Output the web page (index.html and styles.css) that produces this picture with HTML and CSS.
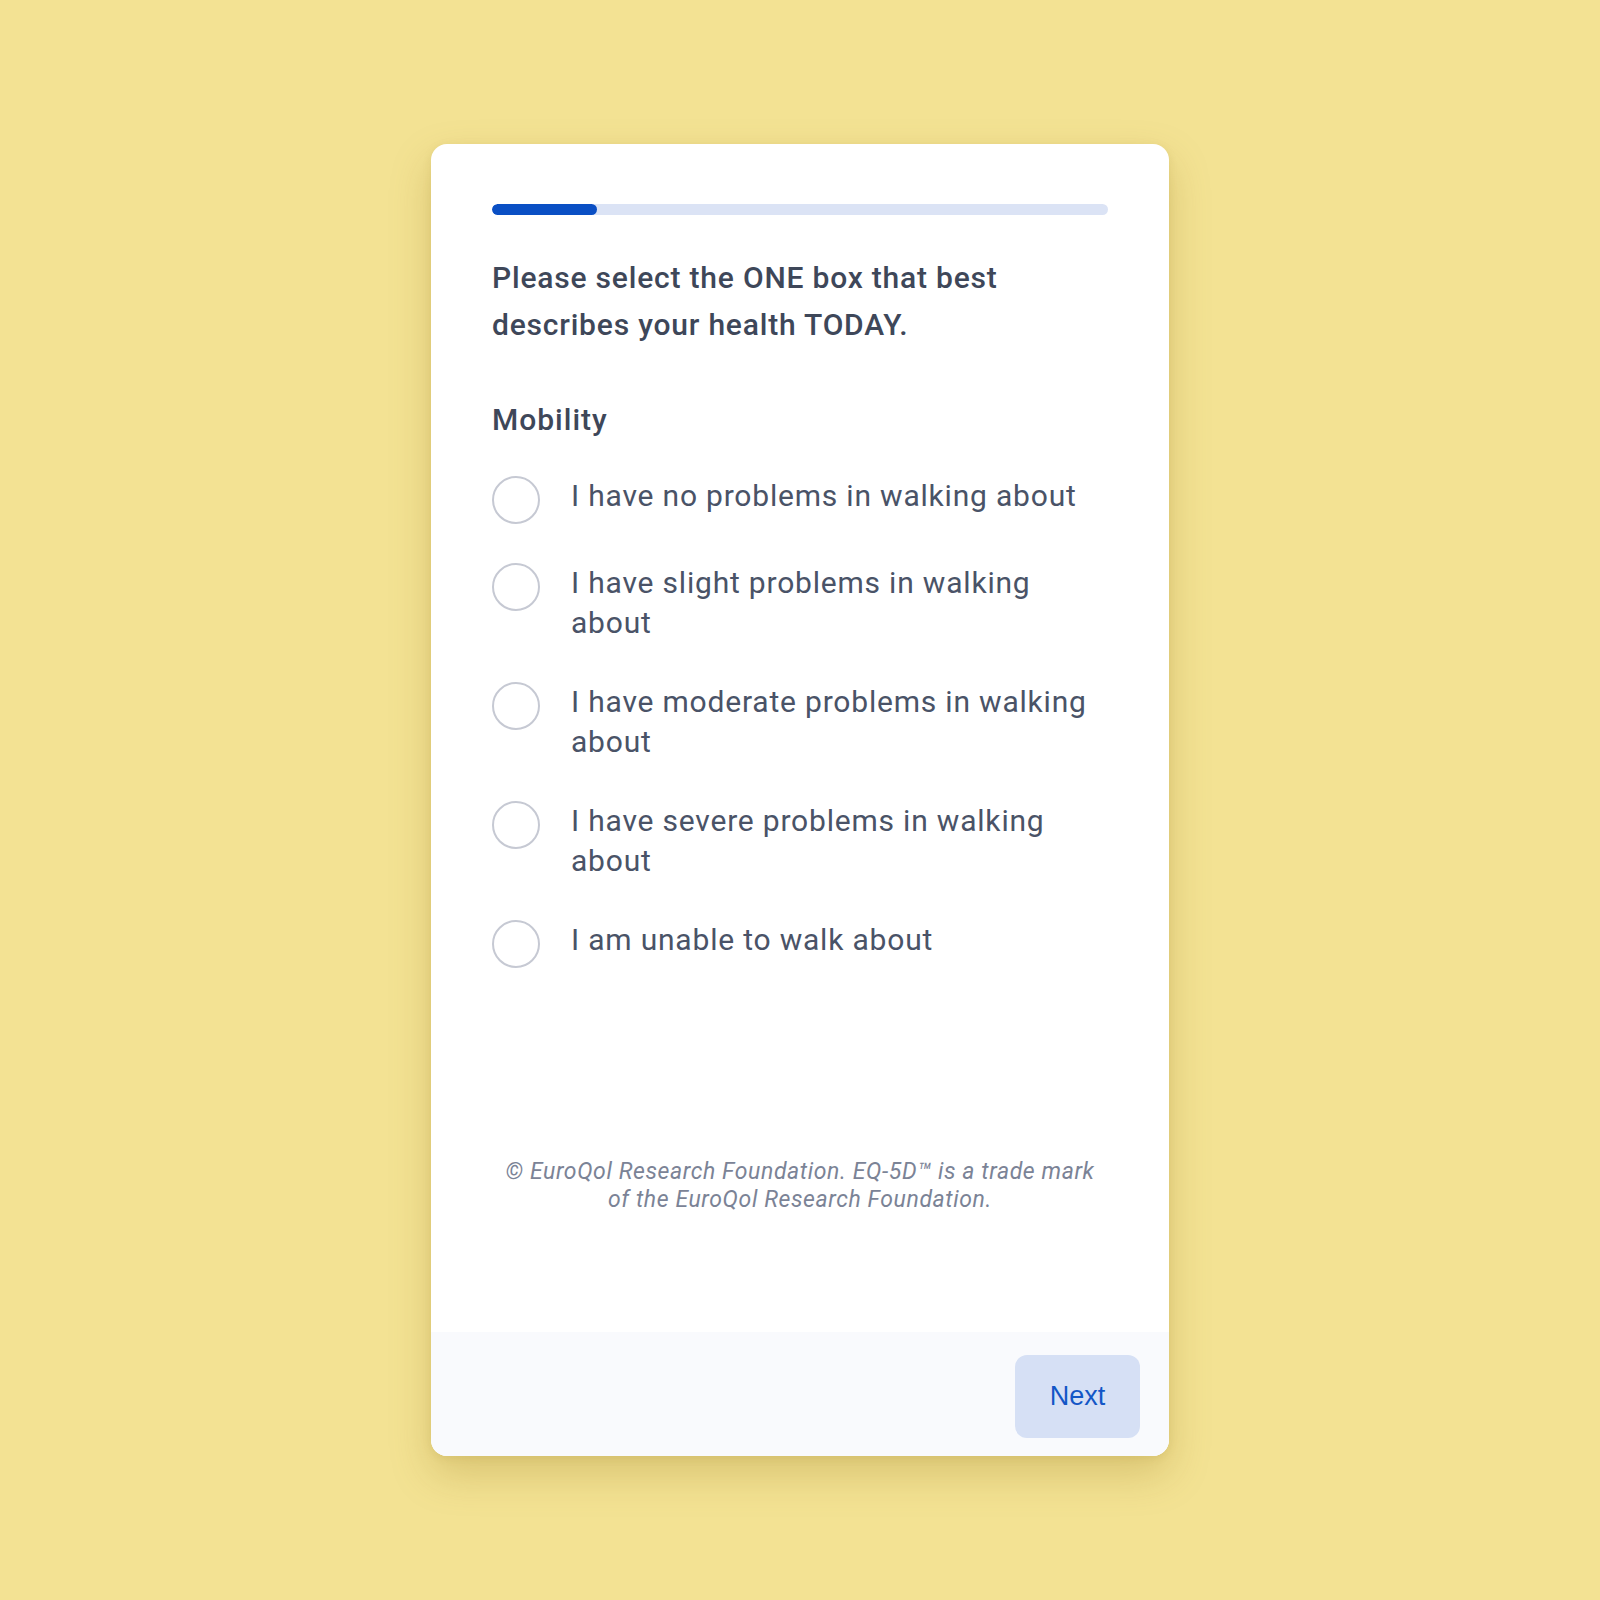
FILE: index.html
```html
<!DOCTYPE html>
<html lang="en">
<head>
<meta charset="utf-8">
<title>EQ-5D Mobility</title>
<link rel="stylesheet" href="styles.css">
</head>
<body>
<div class="card">
  <div class="content">
    <div class="progress"><div class="progress-fill" style="width:17%"></div></div>
    <h1 class="question">Please select the ONE box that best describes your health TODAY.</h1>
    <h2 class="dimension">Mobility</h2>
    <div class="options">
      <label class="option"><span class="radio"></span><span class="option-text">I have no problems in walking about</span></label>
      <label class="option"><span class="radio"></span><span class="option-text">I have slight problems in walking about</span></label>
      <label class="option"><span class="radio"></span><span class="option-text">I have moderate problems in walking about</span></label>
      <label class="option"><span class="radio"></span><span class="option-text">I have severe problems in walking about</span></label>
      <label class="option"><span class="radio"></span><span class="option-text">I am unable to walk about</span></label>
    </div>
    <p class="copyright">© EuroQol Research Foundation. EQ-5D™ is a trade mark of the EuroQol Research Foundation.</p>
  </div>
  <div class="footer">
    <button class="next">Next</button>
  </div>
</div>
</body>
</html>
```
FILE: styles.css
```css
html, body {
  margin: 0;
  padding: 0;
}
body {
  background: #f3e293;
  min-height: 1600px;
  display: flex;
  align-items: center;
  justify-content: center;
  font-family: Roboto, "Liberation Sans", sans-serif;
}
.card {
  width: 738px;
  height: 1312px;
  background: #ffffff;
  border-radius: 16px;
  box-shadow: 0 18px 40px rgba(150, 120, 30, 0.28), 0 2px 8px rgba(150, 120, 30, 0.12);
  display: flex;
  flex-direction: column;
  overflow: hidden;
}
.content {
  flex: 1;
  display: flex;
  flex-direction: column;
  padding: 60px 61px 118px 61px;
}
.progress {
  height: 11px;
  border-radius: 6px;
  background: #dbe3f5;
  overflow: hidden;
}
.progress-fill {
  height: 100%;
  background: #0a4fc4;
  border-radius: 6px;
}
.question {
  margin: 39px 0 0 0;
  font-size: 30px;
  line-height: 47px;
  font-weight: 500;
  letter-spacing: 0.8px;
  color: #3e4759;
}
.dimension {
  margin: 52px 0 0 0;
  font-size: 30px;
  line-height: 40px;
  font-weight: 500;
  letter-spacing: 1px;
  color: #3e4759;
}
.options {
  margin-top: 36px;
  display: flex;
  flex-direction: column;
  gap: 39px;
}
.option {
  display: flex;
  align-items: flex-start;
  gap: 31px;
}
.radio {
  flex: none;
  width: 44px;
  height: 44px;
  border: 2px solid #c6c9d3;
  border-radius: 50%;
  box-sizing: content-box;
}
.option-text {
  font-size: 30px;
  line-height: 40px;
  letter-spacing: 0.8px;
  color: #4a5367;
}
.copyright {
  margin: auto 0 0 0;
  text-align: center;
  font-style: italic;
  font-size: 23px;
  line-height: 28px;
  letter-spacing: 0.6px;
  color: #7b8396;
}
.footer {
  height: 124px;
  background: #f9fafd;
  display: flex;
  justify-content: flex-end;
  align-items: flex-start;
  padding: 23px 29px 0 0;
  box-sizing: border-box;
}
.next {
  width: 125px;
  height: 83px;
  border: none;
  border-radius: 12px;
  background: #d6e0f5;
  color: #1356c6;
  font-family: "Liberation Sans", Arial, sans-serif;
  font-size: 27px;
  padding: 0;
}
```
